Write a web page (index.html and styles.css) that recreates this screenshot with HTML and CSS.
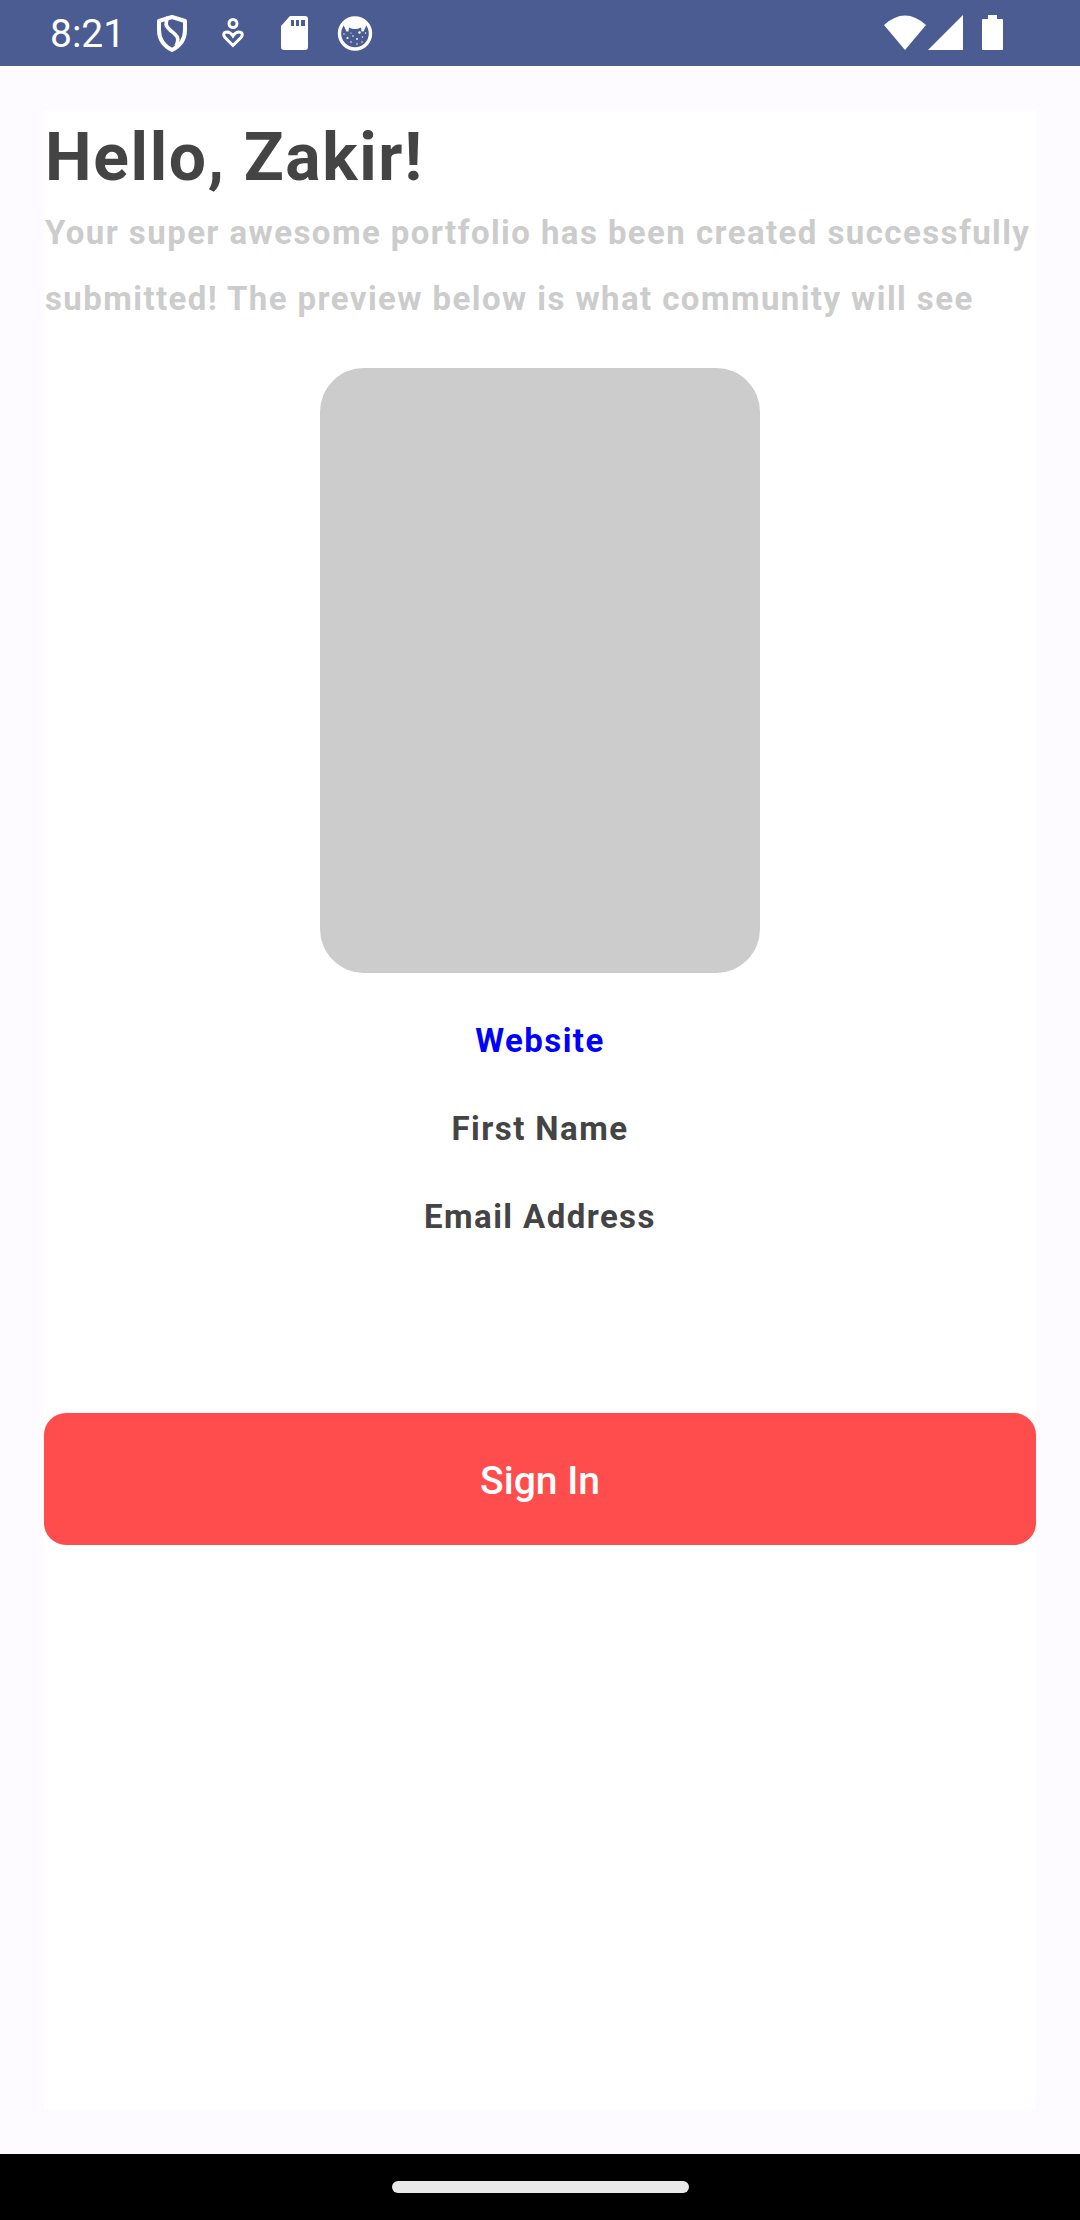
FILE: index.html
```html
<!DOCTYPE html>
<html lang="en">
<head>
<meta charset="utf-8">
<meta name="viewport" content="width=device-width, initial-scale=1">
<title>Portfolio preview</title>
<link rel="stylesheet" href="styles.css">
</head>
<body>
<header class="status-bar">
  <div class="status-left">
    <time class="clock">8:21</time>
    <svg class="icon" viewBox="0 0 44 44" aria-hidden="true">
      <path d="M22 6 L35 10 V19 C35 28 30 35 22 39 C14 35 9 28 9 19 V10 Z" fill="none" stroke="#fff" stroke-width="4" stroke-linejoin="round"/>
      <path d="M18 6 C14.500 12 16 16 20 19 C26 24 30.500 26 26 35" fill="none" stroke="#fff" stroke-width="3.600"/>
    </svg>
    <svg class="icon" viewBox="0 0 44 44" aria-hidden="true">
      <circle cx="22" cy="12.500" r="4" fill="none" stroke="#fff" stroke-width="3"/>
      <path d="M22 34.500 L14 26.500 C9.500 21 17.500 18.500 22 25 C26.500 18.500 34.500 21 30 26.500 Z" fill="none" stroke="#fff" stroke-width="3"/>
    </svg>
    <svg class="icon" viewBox="0 0 44 44" aria-hidden="true">
      <path fill="#fff" fill-rule="evenodd" d="M18 5 H33 Q36 5 36 8 V36 Q36 39 33 39 H12 Q9 39 9 36 V15 Z M19 9 V15 H22 V9 Z M24 9 V15 H27 V9 Z M29 9 V15 H33 V9 Z"/>
    </svg>
    <svg class="icon" viewBox="0 0 44 44" aria-hidden="true">
      <circle cx="22" cy="22.500" r="15.500" fill="none" stroke="#fff" stroke-width="3.400"/>
      <path d="M10 13 Q22 2 34 13 L30.500 20.500 L28.500 20.500 L28 16.500 Q22 19.500 16 16.500 L15.500 20.500 L13.500 20.500 Z" fill="#fff"/>
      <g fill="#fff">
        <circle cx="14.500" cy="27" r="1.100"/><circle cx="20" cy="25" r="0.800"/><circle cx="26.500" cy="21.500" r="1.200"/>
        <circle cx="24" cy="28" r="0.900"/><circle cx="29.500" cy="26" r="0.700"/><circle cx="18" cy="31" r="0.800"/>
        <circle cx="24" cy="33" r="0.800"/><circle cx="11" cy="23" r="0.700"/><circle cx="32.500" cy="22" r="0.700"/>
        <circle cx="29" cy="31" r="0.700"/><circle cx="18" cy="22" r="0.600"/>
      </g>
    </svg>
  </div>
  <div class="status-right">
    <svg class="wifi" viewBox="0 0 42 36" aria-hidden="true"><path d="M0 10 Q21 -9 42 10 L21 35 Z" fill="#fff"/></svg>
    <svg class="signal" viewBox="0 0 36 36" aria-hidden="true"><path d="M0 35 L35 0 V35 Z" fill="#fff"/></svg>
    <svg class="battery" viewBox="0 0 22 36" aria-hidden="true"><path d="M6 0 H15 V4 H20 Q21 4 21 5 V34 Q21 35 20 35 H1 Q0 35 0 34 V5 Q0 4 1 4 H6 Z" fill="#fff"/></svg>
  </div>
</header>
<main class="screen">
  <section class="card">
    <h1 class="title">Hello, Zakir!</h1>
    <p class="subtitle">Your super awesome portfolio has been created successfully submitted! The preview below is what community will see</p>
    <div class="preview" role="img" aria-label="Portfolio image"></div>
    <div class="details">
      <a class="website" href="#">Website</a>
      <span>First Name</span>
      <span>Email Address</span>
    </div>
    <button class="sign-in" type="button">Sign In</button>
  </section>
</main>
<footer class="nav-bar"><div class="nav-handle"></div></footer>
</body>
</html>
```
FILE: styles.css
```css
* {
  box-sizing: border-box;
}

body {
  margin: 0;
  min-height: 100vh;
  display: flex;
  flex-direction: column;
  background: #fdfbff;
  color: #444;
  font-family: Roboto, sans-serif;
}

.status-bar {
  height: 66px;
  padding: 0 76px 0 50px;
  display: flex;
  justify-content: space-between;
  align-items: center;
  background: #4a5c92;
  color: #fff;
}

.status-left,
.status-right {
  display: flex;
  align-items: center;
}

.status-left {
  gap: 17px;
}

.clock {
  margin-right: 8px;
  padding-top: 2px;
  font-size: 39px;
  line-height: 64px;
}

.icon {
  width: 44px;
  height: 44px;
}

.wifi {
  width: 42px;
  height: 36px;
  margin-right: 2px;
}

.signal {
  width: 36px;
  height: 36px;
  margin-right: 18px;
}

.battery {
  width: 22px;
  height: 36px;
}

.screen {
  flex: 1;
  display: flex;
  padding: 44px;
}

.card {
  flex: 1;
  display: flex;
  flex-direction: column;
  background: #fff;
}

.title {
  margin: 0;
  padding: 6px 1px 0;
  font-size: 66px;
  line-height: 84px;
  font-weight: 700;
  letter-spacing: 0.025em;
}

.subtitle {
  margin: 0;
  padding: 0 1px;
  color: #ccc;
}

.subtitle,
.details {
  font-size: 33px;
  line-height: 66px;
  font-weight: 700;
  letter-spacing: 0.043em;
}

.preview {
  align-self: center;
  width: 440px;
  max-width: 100%;
  height: 605px;
  margin: 36px 0 35px;
  border-radius: 44px;
  background: #ccc;
}

.details {
  display: flex;
  flex-direction: column;
  align-items: center;
  gap: 22px;
}

.website {
  color: #00f;
  text-decoration: none;
}

.sign-in {
  height: 132px;
  margin-top: 163px;
  padding: 4px 0 0;
  border: 0;
  border-radius: 22px;
  background: #ff4d4d;
  color: #fff;
  font-family: inherit;
  font-size: 39px;
  font-weight: 500;
}

.nav-bar {
  height: 66px;
  display: flex;
  justify-content: center;
  align-items: center;
  background: #000;
}

.nav-handle {
  width: 297px;
  height: 12px;
  border-radius: 6px;
  background: #e9e9e9;
}
```
